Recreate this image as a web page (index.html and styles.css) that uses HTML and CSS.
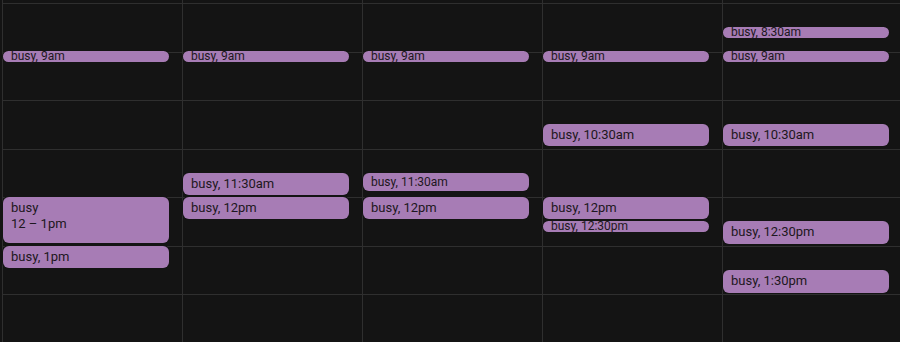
FILE: index.html
```html
<!DOCTYPE html>
<html lang="en">
<head>
<meta charset="utf-8">
<title>Week</title>
<link rel="stylesheet" href="styles.css">
</head>
<body>
<div class="week">
  <!-- Monday -->
  <div class="day">
    <div class="slots">
      <div class="slot slot-lead"></div>
      <div class="slot"></div><div class="slot"></div><div class="slot"></div>
      <div class="slot"></div><div class="slot"></div><div class="slot"></div><div class="slot"></div>
    </div>
    <div class="event compact" style="top:51px;height:11px">busy, 9am</div>
    <div class="event tall" style="top:197px;height:46px"><span>busy</span><span>12 – 1pm</span></div>
    <div class="event" style="top:245.5px;height:22px">busy, 1pm</div>
  </div>
  <!-- Tuesday -->
  <div class="day">
    <div class="slots">
      <div class="slot slot-lead"></div>
      <div class="slot"></div><div class="slot"></div><div class="slot"></div>
      <div class="slot"></div><div class="slot"></div><div class="slot"></div><div class="slot"></div>
    </div>
    <div class="event compact" style="top:51px;height:11px">busy, 9am</div>
    <div class="event" style="top:173px;height:21.5px">busy, 11:30am</div>
    <div class="event" style="top:197px;height:22px">busy, 12pm</div>
  </div>
  <!-- Wednesday -->
  <div class="day">
    <div class="slots">
      <div class="slot slot-lead"></div>
      <div class="slot"></div><div class="slot"></div><div class="slot"></div>
      <div class="slot"></div><div class="slot"></div><div class="slot"></div><div class="slot"></div>
    </div>
    <div class="event compact" style="top:51px;height:11px">busy, 9am</div>
    <div class="event medium" style="top:172.5px;height:18px">busy, 11:30am</div>
    <div class="event" style="top:197px;height:22px">busy, 12pm</div>
  </div>
  <!-- Thursday -->
  <div class="day">
    <div class="slots">
      <div class="slot slot-lead"></div>
      <div class="slot"></div><div class="slot"></div><div class="slot"></div>
      <div class="slot"></div><div class="slot"></div><div class="slot"></div><div class="slot"></div>
    </div>
    <div class="event compact" style="top:51px;height:11px">busy, 9am</div>
    <div class="event" style="top:124px;height:22px">busy, 10:30am</div>
    <div class="event" style="top:197px;height:22px">busy, 12pm</div>
    <div class="event compact" style="top:221px;height:11px">busy, 12:30pm</div>
  </div>
  <!-- Friday -->
  <div class="day">
    <div class="slots">
      <div class="slot slot-lead"></div>
      <div class="slot"></div><div class="slot"></div><div class="slot"></div>
      <div class="slot"></div><div class="slot"></div><div class="slot"></div><div class="slot"></div>
    </div>
    <div class="event compact" style="top:27px;height:11px">busy, 8:30am</div>
    <div class="event compact" style="top:51px;height:11px">busy, 9am</div>
    <div class="event" style="top:124px;height:22px">busy, 10:30am</div>
    <div class="event" style="top:221px;height:22.5px">busy, 12:30pm</div>
    <div class="event" style="top:269.5px;height:23px">busy, 1:30pm</div>
  </div>
</div>
</body>
</html>
```

FILE: styles.css
```css
html, body {
  margin: 0;
  padding: 0;
  background: #141414;
  overflow: hidden;
}

body {
  width: 900px;
  height: 342px;
  font-family: Roboto, "Noto Sans", sans-serif;
  color: #1d1720;
}

.week {
  display: grid;
  grid-template-columns: repeat(5, 180px);
  margin-left: 2px;
  height: 342px;
}

.day {
  position: relative;
  border-left: 1px solid #2f2f2f;
  box-sizing: border-box;
  height: 342px;
}

/* hour rows; the first one is the tail of the hour above the view */
.slots {
  display: flex;
  flex-direction: column;
}

.slot {
  height: 48.5px;
  border-top: 1px solid #2f2f2f;
  box-sizing: border-box;
  flex: none;
}

.slot-lead {
  height: 3px;
  border-top: none;
}

/* events sit over the hour rows at their start time */
.event {
  position: absolute;
  left: 0;
  width: 166px;
  box-sizing: border-box;
  background: #a77cb5;
  border-radius: 6px;
  padding: 3px 8px 0;
  font-size: 13px;
  line-height: 16px;
  white-space: nowrap;
  box-shadow: 0 0 0 1px #141414;
}

.event.tall {
  display: flex;
  flex-direction: column;
}

.event.medium {
  font-size: 12px;
  line-height: 14px;
  padding-top: 2px;
}

.event.compact {
  font-size: 12px;
  line-height: 11px;
  padding-top: 0;
  border-radius: 6px;
}
```
